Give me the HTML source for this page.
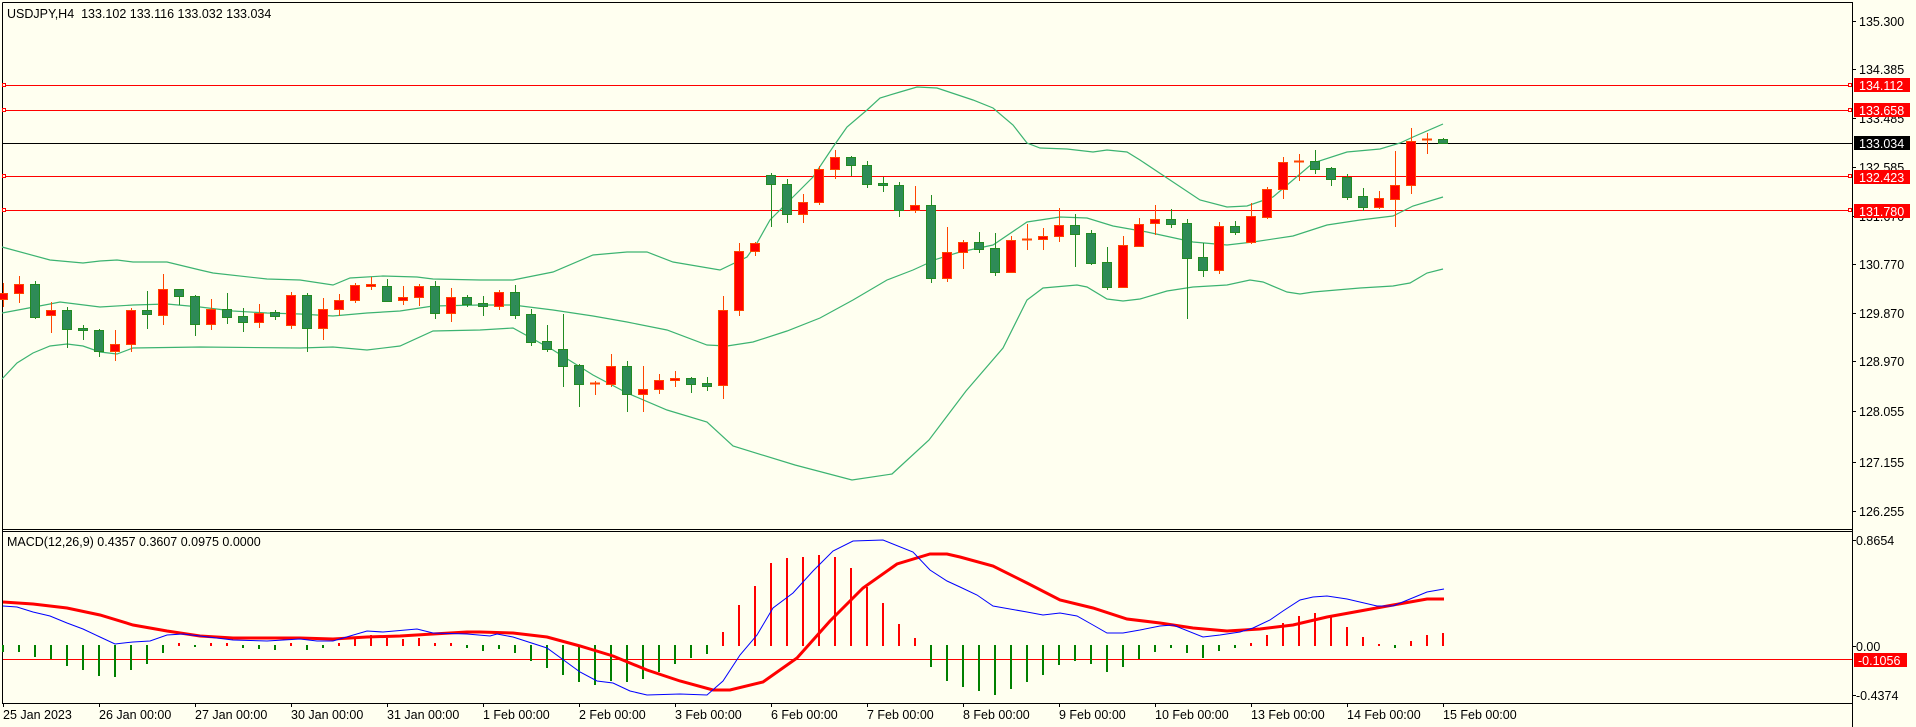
<!DOCTYPE html>
<html><head><meta charset="utf-8"><style>
html,body{margin:0;padding:0;background:#FFFFF0;}
svg{display:block;}
text{font-family:"Liberation Sans","DejaVu Sans",sans-serif;font-size:12.5px;fill:#000;white-space:pre;}
</style></head><body>
<svg width="1916" height="727" viewBox="0 0 1916 727" xmlns="http://www.w3.org/2000/svg" xml:space="preserve">
<rect width="1916" height="727" fill="#FFFFF0"/>
<g stroke="#000" stroke-width="1" fill="none">
<path d="M2.5 2.5H1852.5V727"/>
<path d="M2.5 2.5V703.5H1852.5"/>
<path d="M2 529.5H1852"/>
<path d="M2 531.5H1852"/>
</g>
<g stroke="#000">
<path d="M1852 21.5h4M1852 69.5h4M1852 118.5h4M1852 167.5h4M1852 216.5h4M1852 264.5h4M1852 313.5h4M1852 361.5h4M1852 411.5h4M1852 462.5h4M1852 511.5h4M1852 540.5h4M1852 646.5h4M1852 695.5h4"/>
<path d="M3.5 703v4M99.5 703v4M195.5 703v4M291.5 703v4M387.5 703v4M483.5 703v4M579.5 703v4M675.5 703v4M771.5 703v4M867.5 703v4M963.5 703v4M1059.5 703v4M1155.5 703v4M1251.5 703v4M1347.5 703v4M1443.5 703v4"/>
</g>
<g stroke="#FF0000" stroke-width="1" fill="#FFFFF0">
<path d="M3 85.5H1850M3 110.5H1850M3 176.5H1850M3 210.5H1850M3 659.5H1852"/>
<rect x="2.5" y="83.5" width="3" height="3"/><rect x="2.5" y="108.5" width="3" height="3"/><rect x="2.5" y="174.5" width="3" height="3"/><rect x="2.5" y="208.5" width="3" height="3"/>
<rect x="1848.5" y="83.5" width="3" height="3"/><rect x="1848.5" y="108.5" width="3" height="3"/><rect x="1848.5" y="174.5" width="3" height="3"/><rect x="1848.5" y="208.5" width="3" height="3"/>
</g>
<path d="M3 143.5H1852" stroke="#000"/>
<g stroke="#3CB371" stroke-width="1.2" fill="none">
<polyline points="2,247 50,260 83,263 100,261 117,260 133,262 167,262 200,270 213,273 267,279 300,280 333,285 350,278 383,276 417,277 433,279 480,280 513,280 553,272 593,255 627,252 647,252 673,262 720,270 747,257 757,243 770,220 787,203 813,177 833,147 847,127 867,110 880,98 900,92 917,87 937,88 973,100 993,108 1013,125 1027,143 1040,148 1067,149 1093,152 1107,150 1127,152 1140,160 1167,178 1200,200 1227,207 1247,206 1273,197 1293,180 1313,163 1347,152 1380,149 1400,143 1413,137 1443,124"/>
<polyline points="2,313 50,304 60,302 100,307 133,305 167,304 200,307 233,311 267,313 300,314 333,316 367,313 400,311 433,306 480,305 513,305 553,310 593,316 627,322 667,330 707,345 727,346 753,342 787,331 820,318 853,300 887,280 913,270 937,259 960,252 993,245 1027,222 1060,217 1087,218 1113,226 1147,232 1193,242 1227,245 1253,242 1293,236 1327,225 1360,220 1393,216 1413,206 1443,197"/>
<polyline points="2,379 17,363 33,353 50,346 67,344 83,346 100,352 117,354 133,348 200,347 300,348 333,347 367,350 400,346 433,331 480,330 513,328 553,350 593,375 627,393 667,410 707,422 733,446 795,465 852,480 892,474 929,440 966,391 1003,348 1027,300 1043,288 1077,285 1087,287 1107,299 1123,301 1140,299 1167,291 1193,287 1227,285 1250,280 1263,282 1287,292 1300,294 1313,292 1360,288 1393,286 1410,283 1427,273 1443,269"/>
</g>
<path stroke="#FF4500" stroke-width="1" fill="none" d="M3.5 283V307M19.5 276V303M51.5 302V333M115.5 330V361M131.5 308V352M163.5 274V325M211.5 299V330M259.5 304V328M291.5 292V329M323.5 298V340M339.5 294V316M355.5 283V303M371.5 277V290M403.5 286V305M419.5 284V306M451.5 288V322M499.5 290V310M595.5 381V395M611.5 354V387M643.5 366V412M659.5 374V394M675.5 371V387M723.5 296V399M739.5 243V316M755.5 242V256M803.5 194V223M819.5 166V205M835.5 150V179M915.5 186V213M947.5 227V282M963.5 240V269M1011.5 236V273M1027.5 224V250M1043.5 228V250M1059.5 208V242M1123.5 236V287M1139.5 218V247M1155.5 205V235M1219.5 222V274M1251.5 203V244M1267.5 187V219M1283.5 157V199M1299.5 154V181M1379.5 191V209M1395.5 151V227M1411.5 128V194M1427.5 133V154"/>
<path stroke="#228B22" stroke-width="1" fill="none" d="M35.5 281V319M67.5 307V348M83.5 325V340M99.5 329V357M147.5 291V329M179.5 289V305M195.5 295V336M227.5 293V324M243.5 308V332M275.5 310V320M307.5 293V352M387.5 279V302M435.5 281V319M467.5 295V307M483.5 296V316M515.5 285V319M531.5 309V346M547.5 325V352M563.5 314V387M579.5 364V407M627.5 361V412M691.5 377V393M707.5 377V391M771.5 173V227M787.5 179V223M851.5 156V176M867.5 161V188M883.5 177V192M899.5 182V217M931.5 195V283M979.5 232V253M995.5 233V276M1075.5 214V267M1091.5 230V265M1107.5 247V290M1171.5 209V228M1187.5 219V319M1203.5 243V277M1235.5 221V235M1315.5 150V174M1331.5 167V186M1347.5 174V200M1363.5 188V211M1443.5 138V144"/>
<g fill="#FF0000" stroke="#FF4500" stroke-width="1">
<rect x="-1.5" y="293.5" width="9" height="6"/><rect x="14.5" y="284.5" width="9" height="9"/><rect x="46.5" y="310.5" width="9" height="5"/><rect x="110.5" y="344.5" width="9" height="7"/><rect x="126.5" y="310.5" width="9" height="34"/><rect x="158.5" y="289.5" width="9" height="26"/><rect x="206.5" y="309.5" width="9" height="15"/><rect x="254.5" y="313.5" width="9" height="9"/><rect x="286.5" y="295.5" width="9" height="30"/><rect x="318.5" y="309.5" width="9" height="19"/><rect x="334.5" y="300.5" width="9" height="9"/><rect x="350.5" y="285.5" width="9" height="15"/><rect x="366.5" y="284.5" width="9" height="2"/><rect x="398.5" y="297.5" width="9" height="3"/><rect x="414.5" y="286.5" width="9" height="11"/><rect x="446.5" y="297.5" width="9" height="16"/><rect x="494.5" y="292.5" width="9" height="14"/><rect x="590.5" y="383" width="9" height="1"/><rect x="606.5" y="366.5" width="9" height="18"/><rect x="638.5" y="389.5" width="9" height="5"/><rect x="654.5" y="380.5" width="9" height="9"/><rect x="670.5" y="378.5" width="9" height="2"/><rect x="718.5" y="310.5" width="9" height="75"/><rect x="734.5" y="251.5" width="9" height="59"/><rect x="750.5" y="243.5" width="9" height="8"/><rect x="798.5" y="202.5" width="9" height="12"/><rect x="814.5" y="169.5" width="9" height="33"/><rect x="830.5" y="157.5" width="9" height="12"/><rect x="910.5" y="205.5" width="9" height="5"/><rect x="942.5" y="252.5" width="9" height="26"/><rect x="958.5" y="242.5" width="9" height="10"/><rect x="1006.5" y="240.5" width="9" height="32"/><rect x="1022.5" y="239" width="9" height="1"/><rect x="1038.5" y="236.5" width="9" height="3"/><rect x="1054.5" y="225.5" width="9" height="11"/><rect x="1118.5" y="245.5" width="9" height="42"/><rect x="1134.5" y="224.5" width="9" height="22"/><rect x="1150.5" y="219.5" width="9" height="4"/><rect x="1214.5" y="226.5" width="9" height="44"/><rect x="1246.5" y="216.5" width="9" height="26"/><rect x="1262.5" y="189.5" width="9" height="28"/><rect x="1278.5" y="162.5" width="9" height="27"/><rect x="1294.5" y="161" width="9" height="1"/><rect x="1374.5" y="198.5" width="9" height="9"/><rect x="1390.5" y="185.5" width="9" height="14"/><rect x="1406.5" y="141.5" width="9" height="44"/><rect x="1422.5" y="139" width="9" height="1"/>
</g>
<g fill="#2E8B57" stroke="#228B22" stroke-width="1">
<rect x="30.5" y="284.5" width="9" height="33"/><rect x="62.5" y="310.5" width="9" height="19"/><rect x="78.5" y="328.5" width="9" height="2"/><rect x="94.5" y="330.5" width="9" height="21"/><rect x="142.5" y="310.5" width="9" height="4"/><rect x="174.5" y="289.5" width="9" height="7"/><rect x="190.5" y="296.5" width="9" height="28"/><rect x="222.5" y="309.5" width="9" height="8"/><rect x="238.5" y="316.5" width="9" height="6"/><rect x="270.5" y="312.5" width="9" height="4"/><rect x="302.5" y="295.5" width="9" height="33"/><rect x="382.5" y="286.5" width="9" height="15"/><rect x="430.5" y="286.5" width="9" height="27"/><rect x="462.5" y="297.5" width="9" height="7"/><rect x="478.5" y="303.5" width="9" height="3"/><rect x="510.5" y="292.5" width="9" height="23"/><rect x="526.5" y="314.5" width="9" height="28"/><rect x="542.5" y="341.5" width="9" height="8"/><rect x="558.5" y="349.5" width="9" height="17"/><rect x="574.5" y="365.5" width="9" height="19"/><rect x="622.5" y="366.5" width="9" height="28"/><rect x="686.5" y="378.5" width="9" height="6"/><rect x="702.5" y="383.5" width="9" height="3"/><rect x="766.5" y="175.5" width="9" height="9"/><rect x="782.5" y="184.5" width="9" height="30"/><rect x="846.5" y="157.5" width="9" height="8"/><rect x="862.5" y="165.5" width="9" height="19"/><rect x="878.5" y="183.5" width="9" height="2"/><rect x="894.5" y="185.5" width="9" height="25"/><rect x="926.5" y="205.5" width="9" height="73"/><rect x="974.5" y="242.5" width="9" height="7"/><rect x="990.5" y="248.5" width="9" height="24"/><rect x="1070.5" y="225.5" width="9" height="9"/><rect x="1086.5" y="233.5" width="9" height="30"/><rect x="1102.5" y="262.5" width="9" height="25"/><rect x="1166.5" y="219.5" width="9" height="5"/><rect x="1182.5" y="223.5" width="9" height="35"/><rect x="1198.5" y="257.5" width="9" height="13"/><rect x="1230.5" y="226.5" width="9" height="6"/><rect x="1310.5" y="161.5" width="9" height="8"/><rect x="1326.5" y="168.5" width="9" height="11"/><rect x="1342.5" y="177.5" width="9" height="20"/><rect x="1358.5" y="196.5" width="9" height="11"/><rect x="1438.5" y="139.5" width="9" height="4"/>
</g>
<path stroke="#008000" stroke-width="2" fill="none" d="M3 645V652M19 645V652M35 645V657M51 645V659M67 645V666M83 645V670M99 645V676M115 645V677M131 645V670M147 645V664M163 645V653M195 645V647M243 645V648M259 645V649M275 645V650M307 645V650M323 645V648M467 645V648M483 645V651M499 645V649M515 645V653M531 645V661M547 645V668M563 645V675M579 645V682M595 645V685M611 645V681M627 645V682M643 645V679M659 645V672M675 645V664M691 645V658M707 645V654M931 645V667M947 645V681M963 645V687M979 645V691M995 645V695M1011 645V689M1027 645V682M1043 645V675M1059 645V665M1075 645V661M1091 645V664M1107 645V672M1123 645V667M1139 645V659M1155 645V652M1171 645V648M1187 645V653M1203 645V658M1219 645V651M1235 645V648M1395 645V648"/>
<path stroke="#FF0000" stroke-width="2" fill="none" d="M179 646V643M211 646V643M227 646V643M291 646V643M339 646V643M355 646V639M371 646V635M387 646V638M403 646V639M419 646V638M435 646V643M451 646V643M723 646V632M739 646V605M755 646V586M771 646V563M787 646V558M803 646V557M819 646V555M835 646V557M851 646V568M867 646V587M883 646V603M899 646V624M915 646V638M1251 646V643M1267 646V635M1283 646V623M1299 646V616M1315 646V613M1331 646V617M1347 646V627M1363 646V637M1379 646V644M1411 646V641M1427 646V635M1443 646V633"/>
<polyline fill="none" stroke="#FF0000" stroke-width="3" points="3,602 33,604 67,608 100,615 133,625 167,631 200,636 233,638 267,638 300,638 333,639 367,637 400,636 433,634 467,632 480,632 513,633 547,637 580,646 613,656 647,670 680,681 713,690 730,690 763,682 797,658 830,621 863,588 897,564 930,554 947,554 960,557 993,566 1027,583 1060,600 1093,608 1127,619 1160,623 1193,628 1227,631 1260,629 1293,625 1327,617 1360,611 1393,605 1427,599 1444,599"/>
<polyline fill="none" stroke="#0000FF" stroke-width="1" points="3,606 17,607 33,612 50,616 67,623 83,629 100,637 115,644 133,642 150,641 167,635 183,634 200,636 233,640 267,641 300,639 317,641 333,641 350,636 367,631 383,632 417,629 433,633 467,634 490,636 497,634 513,637 547,648 580,672 597,681 613,683 630,691 647,695 680,694 707,695 723,681 740,655 757,635 773,608 793,593 813,571 833,551 853,541 883,540 913,552 930,570 947,581 960,587 977,595 993,606 1027,612 1043,615 1060,613 1077,616 1093,625 1107,633 1123,633 1140,630 1160,626 1173,625 1203,637 1220,635 1240,632 1253,628 1270,620 1283,611 1300,600 1313,597 1327,596 1347,599 1377,606 1393,606 1410,599 1427,592 1444,589"/>
<text x="7" y="18">USDJPY,H4  133.102 133.116 133.032 133.034</text>
<text x="7" y="546">MACD(12,26,9) 0.4357 0.3607 0.0975 0.0000</text>
<g>
<text x="1859" y="26">135.300</text>
<text x="1859" y="74">134.385</text>
<text x="1859" y="123">133.485</text>
<text x="1859" y="172">132.585</text>
<text x="1859" y="221">131.670</text>
<text x="1859" y="269">130.770</text>
<text x="1859" y="318">129.870</text>
<text x="1859" y="366">128.970</text>
<text x="1859" y="416">128.055</text>
<text x="1859" y="467">127.155</text>
<text x="1859" y="516">126.255</text>
<text x="1856" y="545">0.8654</text>
<text x="1856" y="651">0.00</text>
<text x="1856" y="700">-0.4374</text>
</g>
<rect x="1854" y="78" width="56" height="14" fill="#FF0000"/><text x="1859" y="90" style="fill:#fff">134.112</text>
<rect x="1854" y="103" width="56" height="14" fill="#FF0000"/><text x="1859" y="115" style="fill:#fff">133.658</text>
<rect x="1854" y="136" width="56" height="14" fill="#000"/><text x="1859" y="148" style="fill:#fff">133.034</text>
<rect x="1854" y="170" width="56" height="14" fill="#FF0000"/><text x="1859" y="182" style="fill:#fff">132.423</text>
<rect x="1854" y="204" width="56" height="14" fill="#FF0000"/><text x="1859" y="216" style="fill:#fff">131.780</text>
<rect x="1854" y="653" width="53" height="14" fill="#FF0000"/><text x="1858" y="665" style="fill:#fff">-0.1056</text>
<g>
<text x="3" y="719">25 Jan 2023</text>
<text x="99" y="719">26 Jan 00:00</text>
<text x="195" y="719">27 Jan 00:00</text>
<text x="291" y="719">30 Jan 00:00</text>
<text x="387" y="719">31 Jan 00:00</text>
<text x="483" y="719">1 Feb 00:00</text>
<text x="579" y="719">2 Feb 00:00</text>
<text x="675" y="719">3 Feb 00:00</text>
<text x="771" y="719">6 Feb 00:00</text>
<text x="867" y="719">7 Feb 00:00</text>
<text x="963" y="719">8 Feb 00:00</text>
<text x="1059" y="719">9 Feb 00:00</text>
<text x="1155" y="719">10 Feb 00:00</text>
<text x="1251" y="719">13 Feb 00:00</text>
<text x="1347" y="719">14 Feb 00:00</text>
<text x="1443" y="719">15 Feb 00:00</text>
</g>
</svg>
</body></html>
